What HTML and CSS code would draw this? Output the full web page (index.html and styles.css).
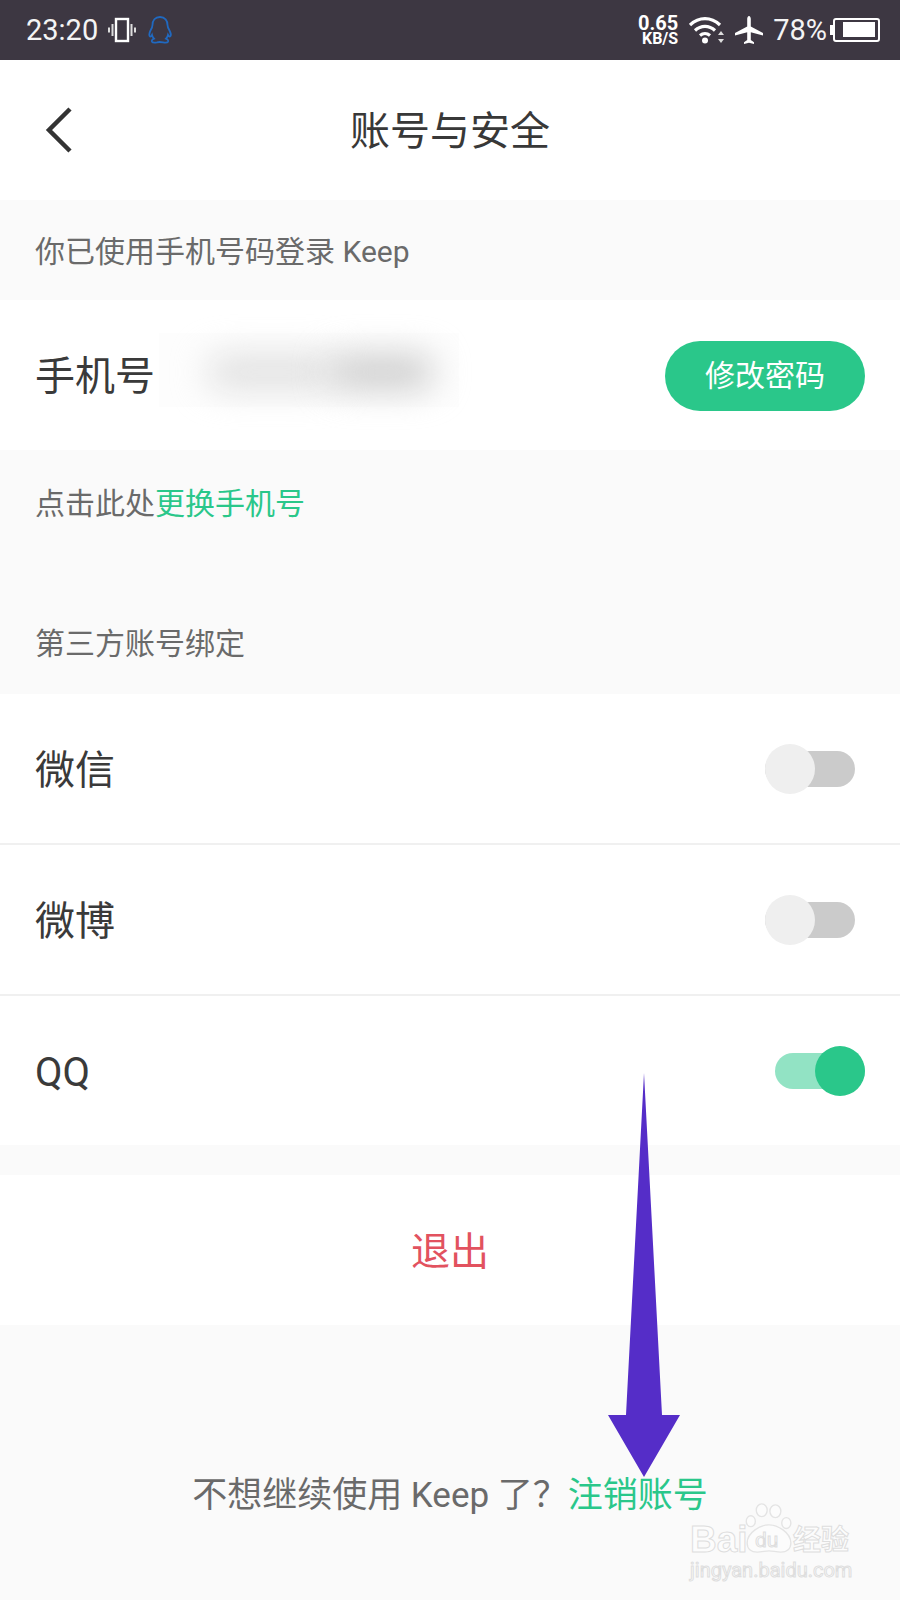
FILE: index.html
```html
<!DOCTYPE html>
<html lang="zh-CN">
<head>
    <meta charset="UTF-8">
    <meta name="viewport" content="width=device-width, initial-scale=1.0">
    <title>账号与安全</title>
    <link rel="stylesheet" href="styles.css">
</head>
<body>
<div class="screen">

    <div class="statusbar">
        <div class="status-left">
            <span class="clock">23:20</span>
            <svg class="vibrate" width="28" height="26" viewBox="0 0 28 26">
                <rect x="8" y="2" width="12" height="22" fill="none" stroke="#fff" stroke-width="2.400"/>
                <path d="M4.500 7v12M23.500 7v12" stroke="#ddd" stroke-width="2"/>
                <path d="M1 10.500v5M27 10.500v5" stroke="#ddd" stroke-width="2"/>
            </svg>
            <svg class="penguin" width="26" height="30" viewBox="0 0 26 30">
                <path d="M13 2c-5 0-7.500 3.500-7.500 8 0 2-.5 3-2 5.500-1.500 3-1.500 5.500-.5 6 .7.300 1.500-.5 2-1.500.3 1.500 1 2.700 2 3.700-2 .8-2.500 2-2 3 .6 1 3 1 5 .6 1.500-.4 2.500-.5 6 0 2 .4 4.400.4 5-.6.500-1 0-2.200-2-3 1-1 1.700-2.200 2-3.700.5 1 1.300 1.800 2 1.500 1-.5 1-3-.5-6-1.500-2.500-2-3.500-2-5.500 0-4.500-2.500-8-7.500-8z" fill="none" stroke="#2069c0" stroke-width="1.800"/>
            </svg>
        </div>
        <div class="status-right">
            <div class="netspeed"><b class="netspeed-value">0.65</b><b class="netspeed-unit">KB/S</b></div>
            <svg class="wifi" width="36" height="28" viewBox="0 0 36 28">
                <path d="M1 9c9-8.500 21-8.500 30 0M6 14.500c6-5.500 14-5.500 20 0M11 19.500c3-2.500 7-2.500 10 0" fill="none" stroke="#fff" stroke-width="3.200"/>
                <circle cx="16" cy="24.500" r="3" fill="#fff"/>
                <path d="M32 15l3 4h-6zM32 27l3-4h-6z" fill="#ddd"/>
            </svg>
            <svg class="plane" width="30" height="30" viewBox="0 0 30 30">
                <path d="M15 1c1.100 0 1.800 1.500 1.800 3v7.500L29 18v2.500l-12.200-3.200V25l3.200 2.200V29l-5-1.300L10 29v-1.800l3.200-2.200v-7.700L1 20.500V18l12.200-6.500V4c0-1.500.7-3 1.800-3z" fill="#fff"/>
            </svg>
            <span class="battery-text">78%</span>
            <div class="battery"><div class="battery-level"></div></div>
        </div>
    </div>

    <div class="navbar">
        <svg class="back" width="30" height="46" viewBox="0 0 30 46">
            <path d="M26 2L5 23l21 21" fill="none" stroke="#333" stroke-width="4.500"/>
        </svg>
        <div class="navbar-title">账号与安全</div>
    </div>

    <div class="hint hint-login">你已使用手机号码登录 Keep</div>

    <div class="row row-phone">
        <span class="row-label">手机号</span>
        <div class="blur-box"><div class="blur-blob"></div><div class="blur-blob blur-blob-dark"></div></div>
        <div class="pill-button">修改密码</div>
    </div>

    <div class="hint hint-change">点击此处<span class="green">更换手机号</span></div>

    <div class="hint hint-third">第三方账号绑定</div>

    <div class="row row-divided">
        <span class="row-label">微信</span>
        <div class="switch"></div>
    </div>
    <div class="row row-divided">
        <span class="row-label">微博</span>
        <div class="switch"></div>
    </div>
    <div class="row row-last">
        <span class="row-label row-label-latin">QQ</span>
        <div class="switch switch-on"></div>
    </div>

    <div class="logout">退出</div>

    <div class="footer">不想继续使用 Keep 了？<span class="green">注销账号</span></div>

    <svg class="arrow" width="76" height="408" viewBox="0 0 76 408">
        <path d="M38 0L56 342H74L38 404L2 342H20Z" fill="#552dc8"/>
    </svg>

    <div class="watermark">
        <span class="wm-bai">Bai</span>
        <svg class="wm-paw" width="48" height="51" viewBox="0 0 52 56">
            <g fill="#fcfcfc" stroke="#e4e4e4" stroke-width="1.500">
                <ellipse cx="18" cy="8" rx="6" ry="7"/>
                <ellipse cx="33" cy="9" rx="6" ry="7"/>
                <ellipse cx="6" cy="20" rx="5" ry="6"/>
                <ellipse cx="45" cy="22" rx="5" ry="6"/>
                <path d="M26 24c-9 0-24 8-24 20 0 7 5 10 11 10 5 0 9-1.500 13-1.500s8 1.500 13 1.500c6 0 11-3 11-10 0-12-15-20-24-20z"/>
            </g>
        </svg>
        <span class="wm-du">du</span>
        <span class="wm-jingyan">经验</span>
        <div class="wm-url">jingyan.baidu.com</div>
    </div>

</div>
</body>
</html>
```

FILE: styles.css
```css
* {
    box-sizing: border-box;
}

html, body {
    margin: 0;
    padding: 0;
}

body {
    font-family: "Roboto", "Noto Sans CJK SC", sans-serif;
    background-color: #fafafa;
}

.screen {
    position: relative;
    width: 900px;
    height: 1600px;
    overflow: hidden;
    background-color: #fafafa;
}

/* status bar */

.statusbar {
    height: 60px;
    padding: 0 20px 0 26px;
    background-color: #3d3742;
    color: #fff;
    display: flex;
    justify-content: space-between;
    align-items: center;
}

.status-left,
.status-right {
    display: flex;
    align-items: center;
}

.clock {
    font-size: 29px;
    color: #f4f4f4;
}

.vibrate {
    margin-left: 10px;
}

.penguin {
    margin-left: 11px;
}

.netspeed {
    display: flex;
    flex-direction: column;
    align-items: flex-end;
}

.netspeed-value {
    font-size: 20px;
    line-height: 18px;
}

.netspeed-unit {
    font-size: 16px;
    line-height: 14px;
}

.wifi {
    margin-left: 11px;
}

.plane {
    margin-left: 9px;
}

.battery-text {
    margin-left: 9px;
    font-size: 29px;
    color: #f4f4f4;
}

.battery {
    position: relative;
    width: 47px;
    height: 24px;
    margin-left: 6px;
    padding: 2px 3px 3px 8px;
    border: 2px solid #fff;
    border-radius: 3px;
}

.battery:before {
    content: '';
    position: absolute;
    left: -5px;
    top: 5px;
    width: 3px;
    height: 10px;
    background-color: #fff;
}

.battery-level {
    height: 100%;
    background-color: #fff;
}

/* nav bar */

.navbar {
    height: 140px;
    background-color: #fff;
    display: flex;
    align-items: center;
    justify-content: center;
    position: relative;
}

.back {
    position: absolute;
    left: 44px;
    top: 47px;
}

.navbar-title {
    margin-bottom: 4px;
    font-size: 40px;
    color: #383838;
}

/* rows */

.hint {
    padding-left: 35px;
    font-size: 30px;
    color: #6a6a6a;
}

.hint-login {
    height: 100px;
    line-height: 104px;
}

.hint-change {
    height: 140px;
    padding-top: 28px;
    line-height: 52px;
}

.hint-third {
    height: 104px;
    line-height: 108px;
}

.green {
    color: #2ac78a;
}

.row {
    height: 150px;
    padding: 0 52px 0 35px;
    background-color: #fff;
    display: flex;
    align-items: center;
    justify-content: space-between;
}

.row-phone {
    position: relative;
}

.row-divided {
    height: 151px;
    border-bottom: 2px solid #f0f0f0;
}

.row-last {
    height: 149px;
}

.row-label {
    margin-bottom: 4px;
    font-size: 40px;
    color: #3a3a3a;
}

.row-label-latin {
    margin-top: 4px;
    margin-bottom: 0;
}

.blur-box {
    position: absolute;
    left: 159px;
    top: 33px;
    width: 300px;
    height: 74px;
    background-color: #fdfdfd;
}

.blur-blob {
    position: absolute;
    left: 48px;
    top: 22px;
    width: 130px;
    height: 34px;
    border-radius: 17px;
    background-color: #e0e0e0;
    filter: blur(17px);
}

.blur-blob-dark {
    left: 170px;
    width: 105px;
    background-color: #cccccc;
}

.pill-button {
    width: 200px;
    height: 70px;
    margin-top: 2px;
    margin-right: -17px;
    border-radius: 35px;
    background-color: #2ac78a;
    color: #fff;
    font-size: 30px;
    line-height: 70px;
    text-align: center;
}

/* switches */

.switch {
    position: relative;
    width: 90px;
    height: 36px;
    margin-right: -7px;
    border-radius: 18px;
    background-color: #cbcbcb;
}

.switch:after {
    content: '';
    position: absolute;
    left: 0;
    top: -7px;
    width: 50px;
    height: 50px;
    border-radius: 50%;
    background-color: #efefef;
}

.switch-on {
    margin-right: -17px;
    background-color: #92e3c4;
}

.switch-on:after {
    left: 40px;
    background-color: #2ac78a;
}

/* bottom */

.logout {
    height: 150px;
    margin-top: 30px;
    background-color: #fff;
    color: #e2525f;
    font-size: 39px;
    line-height: 154px;
    text-align: center;
}

.footer {
    padding-top: 141px;
    font-size: 35px;
    line-height: 60px;
    color: #6a6a6a;
    text-align: center;
}

/* arrow and watermark lie over the page */

.arrow {
    position: absolute;
    left: 606px;
    top: 1073px;
}

.watermark {
    position: absolute;
    left: 690px;
    top: 1503px;
    width: 170px;
    height: 80px;
    line-height: 1;
    color: #fcfcfc;
    -webkit-text-stroke: 1px #dedede;
}

.wm-bai {
    position: absolute;
    left: 0;
    top: 18px;
    font-family: "Liberation Sans", sans-serif;
    font-size: 37px;
    font-weight: bold;
}

.wm-paw {
    position: absolute;
    left: 55px;
    top: 0;
}

.wm-du {
    position: absolute;
    left: 65px;
    top: 27px;
    font-size: 21px;
}

.wm-jingyan {
    position: absolute;
    left: 103px;
    top: 24px;
    font-size: 28px;
    font-weight: bold;
}

.wm-url {
    position: absolute;
    left: 0;
    top: 57px;
    font-size: 20px;
    white-space: nowrap;
}
```
